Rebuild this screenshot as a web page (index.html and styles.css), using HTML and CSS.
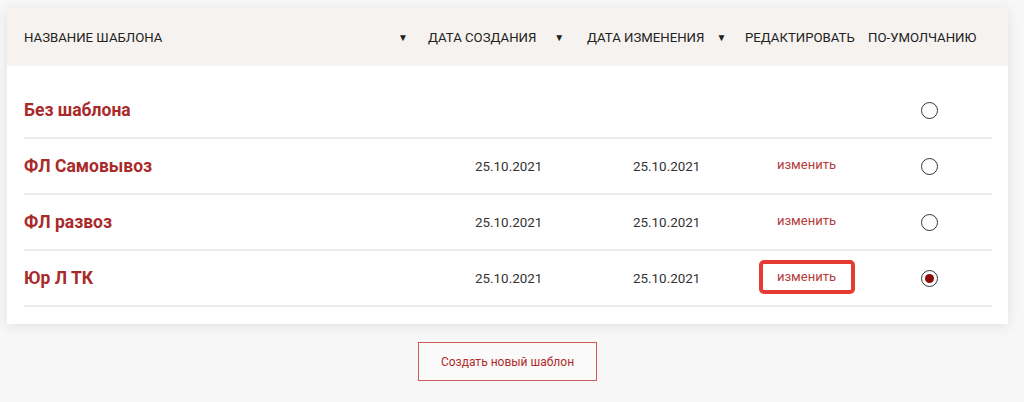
FILE: index.html
```html
<!DOCTYPE html>
<html lang="ru">
<head>
<meta charset="utf-8">
<title>Шаблоны</title>
<link rel="stylesheet" href="styles.css">
</head>
<body>
<div class="page">
  <div class="card">
    <div class="row head">
      <div class="c name">Название шаблона <span class="arr">&#9660;</span></div>
      <div class="c created">Дата создания <span class="arr">&#9660;</span></div>
      <div class="c changed">Дата изменения <span class="arr">&#9660;</span></div>
      <div class="c edit">Редактировать</div>
      <div class="c def">По-умолчанию</div>
    </div>
    <div class="body">
      <div class="row item">
        <div class="c name">Без шаблона</div>
        <div class="c created"></div>
        <div class="c changed"></div>
        <div class="c edit"></div>
        <div class="c def"><span class="radio"></span></div>
      </div>
      <div class="row item">
        <div class="c name">ФЛ Самовывоз</div>
        <div class="c created">25.10.2021</div>
        <div class="c changed">25.10.2021</div>
        <div class="c edit"><a class="lnk" href="#">изменить</a></div>
        <div class="c def"><span class="radio"></span></div>
      </div>
      <div class="row item">
        <div class="c name">ФЛ развоз</div>
        <div class="c created">25.10.2021</div>
        <div class="c changed">25.10.2021</div>
        <div class="c edit"><a class="lnk" href="#">изменить</a></div>
        <div class="c def"><span class="radio"></span></div>
      </div>
      <div class="row item">
        <div class="c name">Юр Л ТК</div>
        <div class="c created">25.10.2021</div>
        <div class="c changed">25.10.2021</div>
        <div class="c edit"><a class="lnk marked" href="#">изменить</a></div>
        <div class="c def"><span class="radio on"></span></div>
      </div>
    </div>
  </div>
  <div class="actions">
    <a class="btn" href="#">Создать новый шаблон</a>
  </div>
</div>
</body>
</html>
```
FILE: styles.css
```css
html, body { margin: 0; padding: 0; }
body { background: #f7f7f7; font-family: Roboto, "Noto Sans", Arial, sans-serif; color: #222; }
.page { padding: 8px 16px 0 7px; }

.card { background: #fff; box-shadow: 0 2px 12px rgba(0,0,0,0.09); }

.row { display: grid; grid-template-columns: 392px 159px 158px 129px 130px; align-items: center; }

.head { background: #f6f2ef; height: 58px; padding: 0 16px 0 17px; font-size: 13.2px; text-transform: uppercase; color: #222; }
.head .c { display: flex; align-items: center; white-space: nowrap; }
.head .name { justify-content: space-between; padding-right: 8px; }
.head .created, .head .changed { padding-left: 12px; }
.head .created { gap: 18px; }
.head .changed { gap: 12px; }
.head .edit { padding-left: 12px; }
.head .def { padding-left: 6px; }
.arr { font-size: 10px; color: #222; }

.body { padding: 17px 16px 17px 17px; }
.item { height: 56px; border-bottom: 2px solid #ececec; box-sizing: border-box; font-size: 13.4px; color: #333; }
.item .name { font-size: 17.5px; font-weight: 700; color: #a92a2a; }
.item .created { padding-left: 59px; }
.item .changed { padding-left: 58px; }
.item .edit { padding-left: 26px; }
.item .def { padding-left: 59px; display: flex; }

.lnk { color: #b33a3a; text-decoration: none; font-size: 13px; line-height: 16px; display: inline-block; padding: 5px 15px 5px 14px; border: 4px solid transparent; border-radius: 5px; position: relative; top: -1px; }
.lnk.marked { border-color: #e53b33; }

.radio { width: 17px; height: 17px; box-sizing: border-box; border: 1.5px solid #333; border-radius: 50%; display: inline-flex; align-items: center; justify-content: center; }
.radio.on::after { content: ""; width: 9px; height: 9px; border-radius: 50%; background: #8c0a0a; }

.actions { display: flex; justify-content: center; padding-top: 18px; }
.btn { width: 179px; height: 39px; box-sizing: border-box; border: 1px solid #cf5a5a; display: flex; align-items: center; justify-content: center; color: #b02a2a; font-size: 12px; text-decoration: none; background: #fafafa; }
```
